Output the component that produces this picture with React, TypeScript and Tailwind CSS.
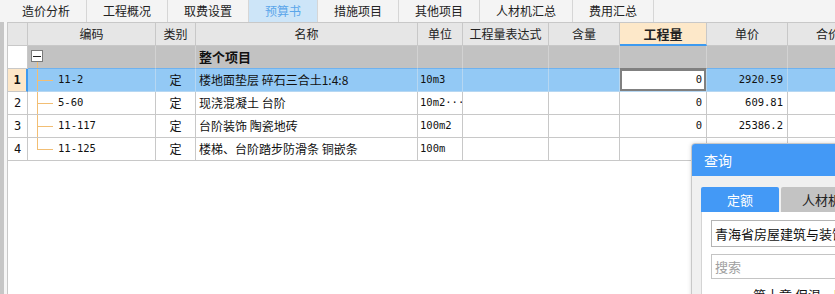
import React from "react";

const tabs = ["造价分析", "工程概况", "取费设置", "预算书", "措施项目", "其他项目", "人材机汇总", "费用汇总"];

const cjk = "font-['Noto_Sans_CJK_SC','Noto_Sans',sans-serif]";
const mono = "font-['DejaVu_Sans_Mono','Noto_Sans_CJK_SC',monospace]";

interface RowData {
  idx: string;
  code: string;
  cat: string;
  name: string;
  unit: string;
  qty: string;
  price: string;
  last?: boolean;
}

const rows: RowData[] = [
  { idx: "1", code: "11-2", cat: "定", name: "楼地面垫层 碎石三合土1:4:8", unit: "10m3", qty: "0", price: "2920.59" },
  { idx: "2", code: "5-60", cat: "定", name: "现浇混凝土 台阶", unit: "10m2···", qty: "0", price: "609.81" },
  { idx: "3", code: "11-117", cat: "定", name: "台阶装饰 陶瓷地砖", unit: "100m2", qty: "0", price: "25386.2" },
  { idx: "4", code: "11-125", cat: "定", name: "楼梯、台阶踏步防滑条 铜嵌条", unit: "100m", qty: "", price: "", last: true },
];

function Row({ r, selected }: { r: RowData; selected?: boolean }) {
  const line = selected ? "border-[#b6d7f2]" : "border-[#c8c8c8]";
  const bg = selected ? "bg-[#93c9f5]" : "bg-white";
  return (
    <div className={`flex h-[23px] text-[12px] text-[#111] ${bg}`}>
      <div
        className={`w-[20px] shrink-0 flex items-center justify-center border-b border-[#c8c8c8] ${
          selected ? "bg-[#fde7c8] font-bold border-r-2 border-r-[#3d9af0]" : "bg-white border-r"
        } ${mono}`}
      >
        {r.idx}
      </div>
      <div className={`relative w-[128px] shrink-0 flex items-center pl-[30px] border-r border-b ${line} ${mono} text-[10.5px]`}>
        <div className={`absolute left-[9px] top-0 w-px bg-[#f2be74] ${r.last ? "h-[11px]" : "h-full"}`} />
        <div className="absolute left-[9px] top-[11px] w-[16px] h-px bg-[#f2be74]" />
        {r.code}
      </div>
      <div className={`w-[40px] shrink-0 flex items-center justify-center border-r border-b ${line} ${cjk}`}>{r.cat}</div>
      <div className={`w-[222px] shrink-0 flex items-center pl-[3px] border-r border-b ${line} ${cjk} whitespace-nowrap overflow-hidden`}>
        {r.name}
      </div>
      <div className={`w-[45px] shrink-0 flex items-center pl-[2px] border-r border-b ${line} ${mono} text-[10.5px] whitespace-nowrap overflow-hidden`}>
        {r.unit}
      </div>
      <div className={`w-[86px] shrink-0 border-r border-b ${line}`} />
      <div className={`w-[71px] shrink-0 border-r border-b ${line}`} />
      {selected ? (
        <div className={`w-[87px] shrink-0 border-r border-b ${line} bg-white`}>
          <div className={`h-full border-2 border-[#808080] flex items-center justify-end pr-[2px] ${mono} text-[10.5px]`}>{r.qty}</div>
        </div>
      ) : (
        <div className={`w-[87px] shrink-0 flex items-center justify-end pr-[4px] border-r border-b ${line} ${mono} text-[10.5px]`}>{r.qty}</div>
      )}
      <div className={`w-[81px] shrink-0 flex items-center justify-end pr-[4px] border-r border-b ${line} ${mono} text-[10.5px]`}>{r.price}</div>
      <div className={`w-[81px] shrink-0 border-r border-b ${line}`} />
    </div>
  );
}

export default function App() {
  return (
    <div className={`relative w-[835px] h-[294px] overflow-hidden bg-white ${cjk}`}>
      {/* tab bar */}
      <div className="flex h-[22px] bg-[#f4f4f4] pl-[6px]">
        {tabs.map((t) => (
          <div
            key={t}
            className={`h-full px-[16px] flex items-center text-[12px] border-r border-[#d6d6d6] whitespace-nowrap ${
              t === "预算书" ? "bg-[#cde5f8] text-[#5ba6ea]" : "text-[#222]"
            }`}
          >
            {t}
          </div>
        ))}
      </div>

      <div className="flex h-[272px]">
        <div className="w-[4px] shrink-0 bg-[#c6c6c6]" />
        <div className="w-[3px] shrink-0 bg-[#f6f6f6]" />
        <div className="flex-1 border-t border-l border-[#c8c8c8] overflow-hidden">
          {/* header */}
          <div className="flex h-[23px] bg-[#e6e6e6] text-[12px] text-[#222]">
            <div className="w-[20px] shrink-0 border-r border-b border-[#c8c8c8]" />
            <div className="w-[128px] shrink-0 flex items-center justify-center border-r border-b border-[#c8c8c8]">编码</div>
            <div className="w-[40px] shrink-0 flex items-center justify-center border-r border-b border-[#c8c8c8]">类别</div>
            <div className="w-[222px] shrink-0 flex items-center justify-center border-r border-b border-[#c8c8c8]">名称</div>
            <div className="w-[45px] shrink-0 flex items-center justify-center border-r border-b border-[#c8c8c8]">单位</div>
            <div className="w-[86px] shrink-0 flex items-center justify-center border-r border-b border-[#c8c8c8]">工程量表达式</div>
            <div className="w-[71px] shrink-0 flex items-center justify-center border-r border-b border-[#c8c8c8]">含量</div>
            <div className="w-[87px] shrink-0 flex items-center justify-center border-r border-[#c8c8c8] border-b-2 border-b-[#3d9af0] bg-[#fde8c9] font-bold text-[13px]">
              工程量
            </div>
            <div className="w-[81px] shrink-0 flex items-center justify-center border-r border-b border-[#c8c8c8]">单价</div>
            <div className="w-[81px] shrink-0 flex items-center justify-center border-r border-b border-[#c8c8c8]">合价</div>
          </div>

          {/* root row */}
          <div className="flex h-[23px] bg-[#c2c2c2] text-[12px] text-[#111]">
            <div className="w-[20px] shrink-0 bg-white border-r border-b border-[#c8c8c8]" />
            <div className="relative w-[128px] shrink-0 border-r border-[#d2d2d2] border-b border-b-[#6fb2ef]">
              <div className="absolute left-[3px] top-[4px] w-[12px] h-[12px] border border-[#7a7a7a] bg-white flex items-center justify-center">
                <div className="w-[8px] h-px bg-[#222]" />
              </div>
              <div className="absolute left-[9px] top-[16px] w-px h-[6px] bg-[#f2be74]" />
            </div>
            <div className="w-[40px] shrink-0 border-r border-[#d2d2d2] border-b border-b-[#6fb2ef]" />
            <div className="w-[222px] shrink-0 flex items-center pl-[3px] font-bold text-[13px] border-r border-[#d2d2d2] border-b border-b-[#6fb2ef]">
              整个项目
            </div>
            <div className="w-[45px] shrink-0 border-r border-[#d2d2d2] border-b border-b-[#6fb2ef]" />
            <div className="w-[86px] shrink-0 border-r border-[#d2d2d2] border-b border-b-[#6fb2ef]" />
            <div className="w-[71px] shrink-0 border-r border-[#d2d2d2] border-b border-b-[#6fb2ef]" />
            <div className="w-[87px] shrink-0 border-r border-[#d2d2d2] border-b border-b-[#808080]" />
            <div className="w-[81px] shrink-0 border-r border-[#d2d2d2] border-b border-b-[#6fb2ef]" />
            <div className="w-[81px] shrink-0 border-r border-[#d2d2d2] border-b border-b-[#6fb2ef]" />
          </div>

          {rows.map((r, i) => (
            <Row key={r.idx} r={r} selected={i === 0} />
          ))}
        </div>
      </div>

      {/* query dialog */}
      <div className="absolute left-[691px] top-[143px] w-[200px] h-[170px] rounded-tl-[4px] overflow-hidden border border-[#c8c8c8] bg-[#f0f0f0] shadow-[0_0_4px_rgba(0,0,0,0.15)]">
        <div className="h-[32px] bg-[#4399f6] flex items-center pl-[12px] text-[14px] text-white">查询</div>
        <div className="pt-[11px] pl-[9px]">
          <div className="flex gap-[2px] h-[25px]">
            <div className="w-[78px] shrink-0 bg-[#4399f6] text-white text-[13px] flex items-center justify-center rounded-t-[2px]">定额</div>
            <div className="w-[120px] shrink-0 bg-[#c3c3c3] text-[#222] text-[13px] flex items-center pl-[21px] rounded-t-[2px] whitespace-nowrap">
              人材机
            </div>
          </div>
          <div className="bg-white border-l border-[#d4d4d4] h-[100px] pt-[8px] pl-[9px]">
            <div className="h-[27px] border border-[#b4b4b4] flex items-center pl-[3px] text-[13px] text-[#111] whitespace-nowrap overflow-hidden">
              青海省房屋建筑与装饰工程计价定额
            </div>
            <div className="mt-[7px] h-[25px] border border-[#c4c4c4] flex items-center pl-[3px] text-[13px] text-[#a0a0a0]">搜索</div>
            <div className="mt-[8px] flex items-start text-[13px] text-[#111] whitespace-nowrap leading-[16px]">
              <span className="ml-[27px] mt-[3px] text-[8px] text-[#777]">▶</span>
              <span className="ml-[7px]">第十章 保温、隔热、防腐工程</span>
            </div>
          </div>
        </div>
      </div>
    </div>
  );
}
